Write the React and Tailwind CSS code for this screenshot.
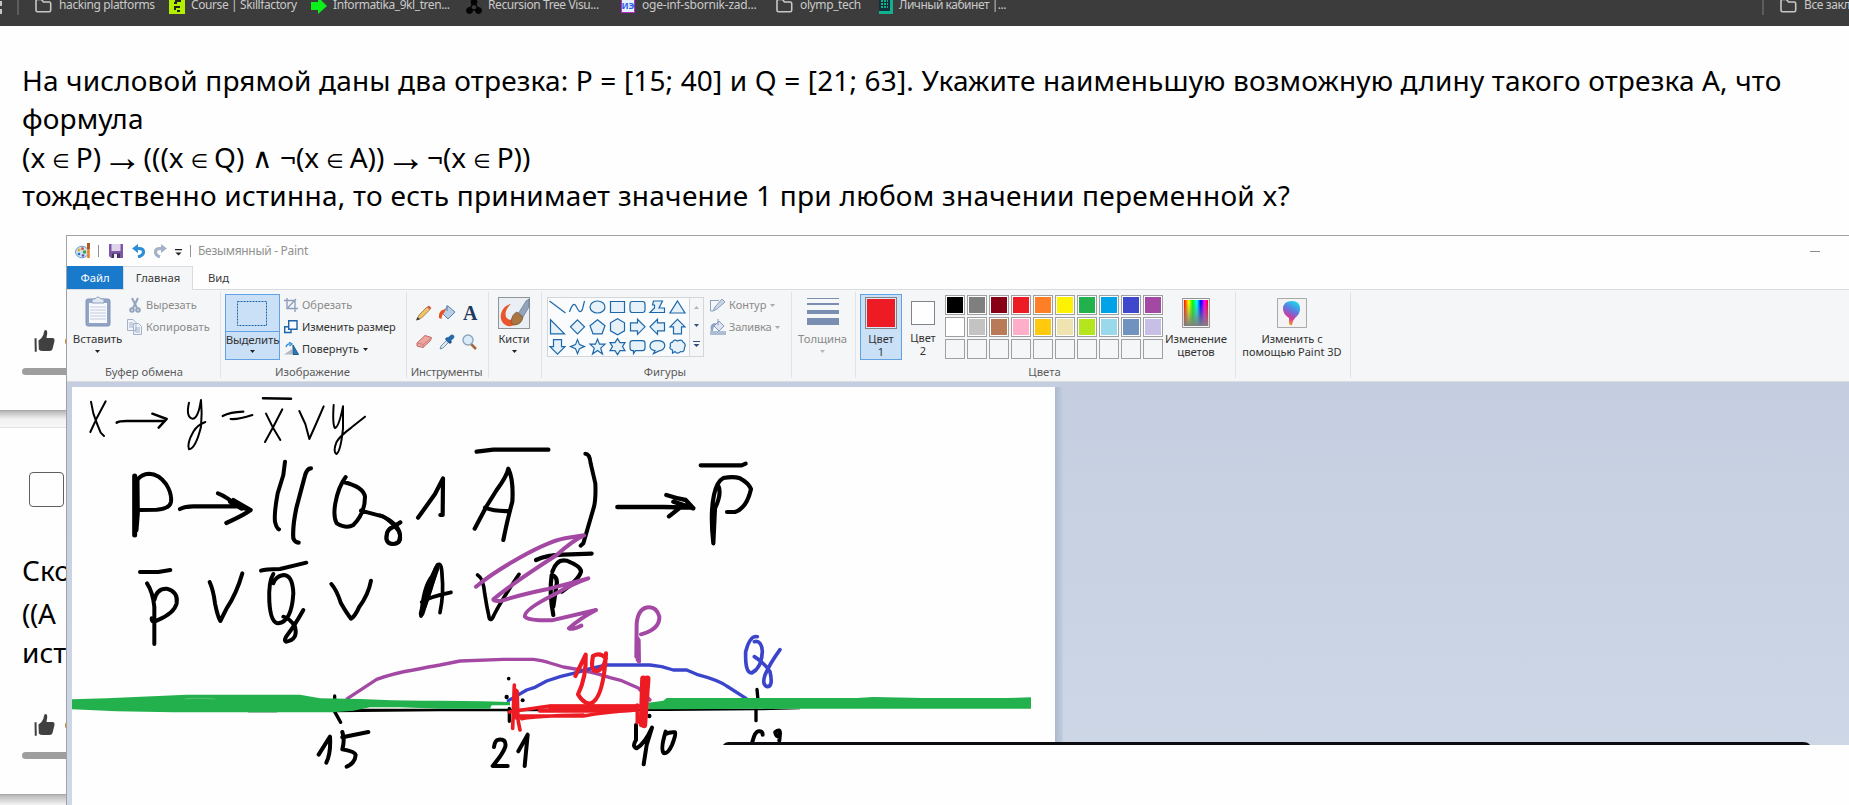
import React from "react";

const Folder = () => (
  <svg width="17" height="15" viewBox="0 0 17 15" className="shrink-0" fill="none" stroke="#c7c7c7" strokeWidth="1.6">
    <path d="M1 3.2Q1 1.5 2.5 1.5H6.5L8.5 4H14.2Q15.7 4 15.7 5.500V12.200Q15.700 13.700 14.200 13.700H2.500Q1 13.700 1 12.200Z" />
  </svg>
);

const Arrow = ({ color = "#1f1f1f" }) => (
  <svg width="5" height="3" viewBox="0 0 5 3" className="shrink-0"><path d="M0 0H5L2.500 3Z" fill={color} /></svg>
);

const Group = ({ className, label, children, labelClass = "" }) => (
  <section className={`flex h-[86px] shrink-0 flex-col border-r border-[#e0e3e6] ${className}`}>
    <div className="flex h-[72px] items-start">{children}</div>
    <div className={`h-[14px] text-center text-[11.3px] text-[#5c5c5c] leading-[15px] whitespace-nowrap ${labelClass}`}>{label}</div>
  </section>
);

const Thumb = () => (
  <svg width="21" height="22" viewBox="0 0 21 22" fill="#404040" className="shrink-0">
    <path d="M.5 8.500L2.500 8L2.800 21.500L.8 22Z" />
    <path d="M4.500 10.500Q8 8.500 9.500 4.500Q9.800 0 11.700 0Q13.500 0 13.200 3.500L12.500 8H19Q21 8.500 20.500 11L18.500 19Q18 21 15.500 21H9Q6 21 4.800 19.500Z" />
  </svg>
);

const In = () => <span className="-ml-[0.5px] -mr-[1px] font-['DejaVu_Sans',sans-serif] text-[20px] leading-none tracking-normal">∈</span>;
const To = () => <span className="-mx-[6px] align-[-3px] font-['Liberation_Sans',sans-serif] text-[40px] leading-[0] tracking-normal">→</span>;

const shapes = [
  "M-8-6L8 6",
  "M-8 5C-5-4-3-4-1 0S3 7 5 2L7-6",
  "M-7.500 0A7.500 6 0 1 0 7.500 0A7.500 6 0 1 0-7.500 0Z",
  "M-7-5.500H7V5.500H-7Z",
  "M-5-5.500H5Q7.500-5.500 7.500-3V3Q7.500 5.500 5 5.500H-5Q-7.500 5.500-7.500 3V-3Q-7.500-5.500-5-5.500Z",
  "M-4-6H5L1.500 1H7V5.500H-7.500L-3 1V-2H-5Z",
  "M0-6L7.500 6H-7.500Z",
  "M-7-7V7H7Z",
  "M0-7L7 0L0 7L-7 0Z",
  "M0-7L7.500-1L4.500 7H-4.500L-7.500-1Z",
  "M0-8L7-4V4L0 8L-7 4V-4Z",
  "M-7-4H0V-7.500L7.500 0L0 7.500V4H-7Z",
  "M7-4H0V-7.500L-7.500 0L0 7.500V4H7Z",
  "M-4 7V0H-7.500L0-7.500L7.500 0H4V7Z",
  "M-4-7V0H-7.500L0 7.500L7.500 0H4V-7Z",
  "M0-7L2-2L7 0L2 2L0 7L-2 2L-7 0L-2-2Z",
  "M0-7.500L2-2.500H7.500L3.200 1.500L5 7.500L0 4L-5 7.500L-3.200 1.500L-7.500-2.500H-2Z",
  "M0-8L2.500-4H7.500L5 0L7.500 4H2.500L0 8L-2.500 4H-7.500L-5 0L-7.500-4H-2.500Z",
  "M-5-6H5Q7.500-6 7.500-3.500V1.500Q7.500 4 5 4H-2L-4 7V4H-5Q-7.500 4-7.500 1.500V-3.500Q-7.500-6-5-6Z",
  "M-2.500 4C-10 2.500-9-6 0-6S10 2.500 1 4.500L-4 7Z",
  "M-5-4.500Q-3-8 0-5.500Q4-8 5.500-4.500Q9-2 7 1Q7 6 3 5Q0 8-2.500 5L-5 6.500V3.500Q-9 2-7-.5Q-8-4-5-4.500Z",
];

const palette = [
  "#000000", "#7f7f7f", "#880015", "#ed1c24", "#ff7f27", "#fff200", "#22b14c", "#00a2e8", "#3f48cc", "#a349a4",
  "#ffffff", "#c3c3c3", "#b97a57", "#ffaec9", "#ffc90e", "#efe4b0", "#b5e61d", "#99d9ea", "#7092be", "#c8bfe7",
  null, null, null, null, null, null, null, null, null, null,
];

const Bookmarks = () => (
  <nav className="relative flex h-[26px] shrink-0 overflow-hidden bg-[#3c3c3c] text-[#c9c9c9] text-[12px] leading-[12px]">
    <div className="-mt-[5px] flex h-[20px] w-full items-center whitespace-nowrap">
      <div className="flex w-[3px] flex-col gap-[3px] pt-1"><i className="h-[5px] w-[2px] bg-[#c7c7c7]" /><i className="h-[5px] w-[2px] border border-[#c7c7c7]" /></div>
      <i className="ml-[14px] h-[16px] w-[2px] self-end bg-[#5c5c5c]" />
      <div className="ml-[16px] flex w-[134px] items-center"><Folder /><span className="ml-[7px] tracking-[-0.38px]">hacking platforms</span></div>
      <div className="flex w-[142px] items-center">
        <svg width="16" height="17" viewBox="0 0 16 17" className="shrink-0"><path d="M0 0H16V17H0Z" fill="#b5ef00" /><path d="M6 3H12V5H8V7H5V5H6M5 9H11V11H7V13H5M8 13H11V15H8" fill="#222" /></svg>
        <span className="ml-[6px] tracking-[-0.4px]">Course | Skillfactory</span>
      </div>
      <div className="flex w-[155px] items-center">
        <svg width="16" height="17" viewBox="0 0 16 17" className="shrink-0"><path d="M0 5H7V0L16 9L7 17V13H0Z" fill="#0bef1b" /></svg>
        <span className="ml-[6px] tracking-[-0.42px]">Informatika_9kl_tren...</span>
      </div>
      <div className="flex w-[155px] items-center">
        <svg width="16" height="17" viewBox="0 0 16 17" className="shrink-0" fill="#050505" stroke="#050505"><path d="M8 4L3.500 13H12.500Z" fill="none" strokeWidth="1.5" /><circle cx="8" cy="5" r="3" /><circle cx="3.500" cy="13.500" r="3" /><circle cx="12.500" cy="13.500" r="3" /></svg>
        <span className="ml-[6px] tracking-[-0.4px]">Recursion Tree Visu...</span>
      </div>
      <div className="flex w-[155px] items-center">
        <span className="flex h-[16px] w-[14px] items-center justify-center border border-[#b52bd0] bg-[#e6f0ff] text-[9px] font-bold leading-none text-[#2b62e8]">ИЭ</span>
        <span className="ml-[7px] tracking-[-0.22px]">oge-inf-sbornik-zad...</span>
      </div>
      <div className="flex w-[103px] items-center"><Folder /><span className="ml-[7px] tracking-[-0.38px]">olymp_tech</span></div>
      <div className="flex items-center">
        <svg width="14" height="17" viewBox="0 0 14 17" className="shrink-0"><path d="M0 0H14V17H0Z" fill="#10b090" /><path d="M0 0H11V14H0Z" fill="#12303a" /><path d="M2 4H9M2 7H9M2 10H9" stroke="#14d8a8" strokeWidth="1.500" strokeDasharray="2 1" /></svg>
        <span className="ml-[6px] tracking-[-0.48px]">Личный кабинет |...</span>
      </div>
      <i className="ml-auto h-[16px] w-[2px] self-end bg-[#5c5c5c]" />
      <div className="ml-[16px] flex w-[69px] items-center"><Folder /><span className="ml-[7px] tracking-[-0.4px]">Все закладки</span></div>
    </div>
  </nav>
);

const TitleBar = () => (
  <header className="flex h-[30px] shrink-0 items-center pl-[8px] text-[#8f8f8f]">
    <svg width="17" height="16" viewBox="0 0 17 16"><ellipse cx="7" cy="9" rx="6.500" ry="5.800" fill="#cfe3f4" stroke="#6a9cc8" /><circle cx="4" cy="7" r="1.500" fill="#d8b030" /><circle cx="7.500" cy="5.500" r="1.500" fill="#e2502c" /><circle cx="9.500" cy="9" r="1.800" fill="#3da34c" /><circle cx="4" cy="11" r="1.300" fill="#226fc0" /><circle cx="8" cy="12.500" r="1.300" fill="#5b4fb0" /><path d="M13.500 6V15" stroke="#e87f22" strokeWidth="2.500" /><path d="M13.500 0V6" stroke="#a85c28" strokeWidth="3" /></svg>
    <i className="ml-[6px] h-[12px] w-px bg-[#929292]" />
    <svg width="14" height="14" viewBox="0 0 14 14" className="ml-[10px]"><path d="M0 0H14V14H2L0 12Z" fill="#7d57a8" /><path d="M2.500 0H11.500V7H2.500Z" fill="#ded4ea" /><path d="M3 9.500H11V14H3Z" fill="#44325f" /><path d="M5 10H8V14H5Z" fill="#eee" /></svg>
    <svg width="14" height="14" viewBox="0 0 14 14" className="ml-[9px]"><path d="M2 4.500H7Q11.500 4.500 11.500 8Q11.500 11.500 6 13" fill="none" stroke="#2e8fd8" strokeWidth="3.200" /><path d="M0 4.500L6 0V9Z" fill="#2e8fd8" /></svg>
    <svg width="14" height="14" viewBox="0 0 14 14" className="ml-[7px]"><path d="M12 4.500H7Q2.500 4.500 2.500 8Q2.500 11.500 7 13" fill="none" stroke="#a3b2c8" strokeWidth="3.200" /><path d="M14 4.500L8 0V9Z" fill="#a3b2c8" /></svg>
    <svg width="7" height="7" viewBox="0 0 7 7" className="ml-[8px] mt-[2px]"><path d="M0 0H7V1.200H0ZM.5 3.500H6.500L3.500 6.500Z" fill="#1f1f1f" /></svg>
    <i className="ml-[8px] h-[12px] w-px bg-[#929292]" />
    <span className="ml-[7px] text-[12px] text-[#919191] tracking-[-0.3px]">Безымянный - Paint</span>
    <i className="ml-auto mr-[29px] h-px w-[10px] bg-[#8c8c8c]" />
  </header>
);

const Tabs = () => (
  <div className="flex h-[24px] shrink-0 items-stretch text-[11.3px] text-[#3a3a3a] leading-[24px]">
    <div className="w-[56px] border-b border-[#dadbdc] bg-[#1979ca] text-center text-white">Файл</div>
    <div className="w-[70px] border-x border-t border-[#dadbdc] bg-[#f5f6f7] text-center leading-[22px]">Главная</div>
    <div className="grow border-b border-[#dadbdc] pl-[15px]">Вид</div>
  </div>
);

const Ribbon = () => (
  <div className="flex h-[92px] shrink-0 overflow-hidden border-b border-[#dadbdc] bg-[#f5f6f7] pt-[2px] text-[#333]">
    <Group className="w-[154px]" label="Буфер обмена" labelClass="pl-[1px]">
      <div className="flex w-[61px] flex-col items-center pt-[4px]">
        <svg width="26" height="32" viewBox="0 0 26 32"><rect x="1" y="3" width="24" height="27" rx="2" fill="#92a4c6" stroke="#8194b8" /><path d="M4 7H22V27H4Z" fill="#f7f9fc" /><path d="M5 11H21M5 14H21M5 17H21M5 20H21M5 23H21" stroke="#c0cce0" /><path d="M7 3H10Q13-1 16 3H19V7H7Z" fill="#e3e9f2" stroke="#8d9fbe" /></svg>
        <span className="mt-[3px] text-[11.5px] leading-4 tracking-[-0.1px]">Вставить</span>
        <span className="mt-[3px]"><Arrow /></span>
      </div>
      <div className="-ml-[1px] flex flex-col pt-[2px] text-[#8b8b8b]">
        <div className="flex h-[22px] items-center">
          <svg width="16" height="16" viewBox="0 0 16 16" fill="none" stroke="#94a3be" strokeWidth="2"><path d="M5 1L10 11M11 1L6 11" /><circle cx="5" cy="13" r="1.800" /><circle cx="11" cy="13" r="1.800" /></svg>
          <span className="ml-[3px]">Вырезать</span>
        </div>
        <div className="flex h-[22px] items-center">
          <svg width="16" height="16" viewBox="0 0 16 16" fill="#f0f4fa" stroke="#a3b2ca"><path d="M.5.5H6L9 3.500V11.500H.5ZM6.500 4.500H11.500L14.500 7.500V15.500H6.500Z" /><path d="M2 4H6M2 6H6M2 8H6M8 9H13M8 11H13M8 13H13" /></svg>
          <span className="ml-[3px] tracking-[0.05px]">Копировать</span>
        </div>
      </div>
    </Group>

    <Group className="w-[186px]" label="Изображение" labelClass="pr-[2px]">
      <div className="ml-[4px] mt-[2px] flex h-[66px] w-[55px] flex-col items-center border border-[#62a2e4] bg-[#c9e0f7]">
        <div className="flex h-[37px] w-full items-center justify-center border-b border-[#62a2e4]">
          <svg width="31" height="25" viewBox="0 0 31 25"><rect x=".5" y=".5" width="29" height="24" fill="none" stroke="#1c63a8" strokeDasharray="2 1" /></svg>
        </div>
        <span className="text-[11.5px] leading-[15px] tracking-[-0.2px]">Выделить</span>
        <span className="mt-[3px]"><Arrow /></span>
      </div>
      <div className="ml-[4px] flex flex-col pt-[2px]">
        <div className="flex h-[22px] items-center text-[#8b8b8b]">
          <svg width="14" height="14" viewBox="0 0 14 14" fill="none" stroke="#8fa0bd" strokeWidth="1.400"><path d="M3 0V10.500H14M0 2.500H11V14M4 9.500L12 1" /></svg>
          <span className="ml-[4px]">Обрезать</span>
        </div>
        <div className="flex h-[22px] items-center">
          <svg width="14" height="14" viewBox="0 0 14 14" fill="#f8fbfe" stroke="#1c63a8" strokeWidth="1.400"><path d="M.7 6.700H7V12.500H.7Z" /><path d="M4.700.7H13V9.300H4.700Z" /></svg>
          <span className="ml-[4px] tracking-[-0.1px]">Изменить размер</span>
        </div>
        <div className="flex h-[22px] items-center">
          <svg width="15" height="14" viewBox="0 0 15 14"><path d="M0 12.500L8 7V12.500Z" fill="#b4b9bf" /><path d="M9 3V12.500H14.500Z" fill="#2d78b8" stroke="#1c5990" /><path d="M2 5Q3 1.500 6 2M5 0L8 2L5.500 4" fill="none" stroke="#2f8bd5" strokeWidth="1.300" /></svg>
          <span className="ml-[3px] mr-[4px]">Повернуть</span><Arrow />
        </div>
      </div>
    </Group>

    <Group className="w-[82px]" label="Инструменты" labelClass="pr-[2px] tracking-[-0.25px]">
      <div className="ml-[9px] grid grid-cols-[23px_23px_16px] gap-y-[12px] pt-[13px]">
        <svg width="16" height="16" viewBox="0 0 16 16"><path d="M1 14.500L3 10L11 2L14 4.500L5.500 13Z" fill="#efc36b" stroke="#96702c" strokeWidth=".8" /><path d="M11 2L13 .5L15.500 3L14 4.500Z" fill="#d65a52" /><path d="M0 15.500L1.500 12L4 14.500Z" fill="#3c3c3c" /></svg>
        <svg width="18" height="16" viewBox="0 0 18 16"><path d="M3 8L9 1L16 7L9 14Z" fill="#b7cfe7" stroke="#5f7ea5" /><path d="M0 13Q-1 5 7 4L5 8Q3 9 2.500 14Z" fill="#e8501f" /><path d="M8 0V6" stroke="#5f7ea5" /></svg>
        <span className="pl-px font-['Liberation_Serif',serif] text-[20px] font-bold leading-[17px] text-[#1e3a60]">A</span>
        <svg width="17" height="16" viewBox="0 0 17 16"><path d="M1 9L9 1.500L15.500 3.500L14.500 6.500L7 13.500L1 12Z" fill="#efa5a0" stroke="#bb6b66" /><path d="M1 9L7.500 10.500L15.500 3.500M7.500 10.500L7 13.500" fill="none" stroke="#cf807b" /></svg>
        <svg width="17" height="16" viewBox="0 0 17 16"><path d="M1 15L2 12L8 6L10 8L4 14Z" fill="#dce9f2" stroke="#7492a8" /><path d="M7 4L12 9" stroke="#1d4e86" strokeWidth="3" /><path d="M9.500 6L13 2.800" stroke="#2769ab" strokeWidth="4.500" strokeLinecap="round" /></svg>
        <svg width="16" height="16" viewBox="0 0 16 16"><path d="M9 10L14 15" stroke="#a8673a" strokeWidth="2.500" /><circle cx="6" cy="6" r="5" fill="#d9ebf9" stroke="#8da4ba" strokeWidth="1.400" /></svg>
      </div>
    </Group>

    <Group className="w-[53px]" label="">
      <div className="ml-[9px] flex w-[32px] flex-col items-center pt-[5px]">
        <svg width="32" height="32" viewBox="0 0 32 32"><rect x=".5" y=".5" width="31" height="31" fill="#e9eff4" stroke="#8f9499" /><path d="M13 7Q7 8 4 14Q1 21 5 26Q9 31 17 28L22 25L17 21Q11 25 8 20Q6 13 13 7Z" fill="#e8562a" /><path d="M20 17L28 4L31 2V10L25 20Z" fill="#93a3bb" stroke="#596b85" strokeWidth=".6" /><path d="M13 25Q14 17 19 15L25 20Q24 27 17 28Q14 28 13 25Z" fill="#a97542" stroke="#74502c" strokeWidth=".7" /></svg>
        <span className="mt-[2px] leading-4">Кисти</span>
        <span className="mt-[3px]"><Arrow /></span>
      </div>
    </Group>

    <Group className="w-[250px]" label="Фигуры" labelClass="pr-[3px]">
      <div className="ml-[5px] mt-[5px] flex h-[60px] w-[157px] border border-[#d3d6d9] bg-[#f9fbfd]">
        <svg width="141" height="58" viewBox="0 0 141 58" stroke="#1e68a9" strokeWidth="1.200">
          {shapes.map((d, i) => (
            <path key={i} d={d} fill={i < 2 ? "none" : "#e6f1f9"} transform={`translate(${9.5 + (i % 7) * 20} ${9 + Math.floor(i / 7) * 19.8})`} />
          ))}
        </svg>
        <div className="flex w-[14px] flex-col items-center justify-between border-l border-[#d3d6d9] bg-[#f5f6f7] py-[8px]">
          <svg width="5" height="3"><path d="M0 3H5L2.500 0Z" fill="#b0b4b9" /></svg>
          <Arrow color="#34517a" />
          <svg width="7" height="7" viewBox="0 0 7 7"><path d="M0 0H7V1H0ZM.5 3H6.500L3.500 6Z" fill="#34517a" /></svg>
        </div>
      </div>
      <div className="ml-[6px] flex flex-col pt-[2px] text-[#8b8b8b]">
        <div className="flex h-[22px] items-center">
          <svg width="16" height="15" viewBox="0 0 16 15"><path d="M.5 2.500H9M.5 2V13M.5 13H3" stroke="#8b9fc0" fill="none" /><path d="M3 13L5 9L12 1L15 4L7 11Z" fill="#c9d3e3" stroke="#8b9fc0" /></svg>
          <span className="ml-[3px] mr-[4px]">Контур</span><Arrow color="#a9a9a9" />
        </div>
        <div className="flex h-[22px] items-center">
          <svg width="16" height="16" viewBox="0 0 16 16"><path d="M0 12H16V16H0Z" fill="#aebdd6" /><path d="M4 7L9 2L14 7L9 12Z" fill="#dce4ef" stroke="#8799b6" /><path d="M8 0V6" stroke="#8799b6" /><path d="M1 12Q-1 4 6 4L5 7Q3 8 3 12Z" fill="#8fa3c4" /></svg>
          <span className="ml-[3px] mr-[4px] tracking-[-0.2px]">Заливка</span><Arrow color="#a9a9a9" />
        </div>
      </div>
    </Group>

    <Group className="w-[64px]" label="">
      <div className="flex w-[61px] flex-col items-center pt-[6px] text-[#8b8b8b]">
        <div className="flex h-[34px] w-[32px] flex-col"><i className="h-px bg-[#7a8eb1]" /><i className="mt-[4px] h-[2px] bg-[#7a8eb1]" /><i className="mt-[5px] h-[4px] bg-[#7a8eb1]" /><i className="mt-[4px] h-[7px] bg-[#7a8eb1]" /></div>
        <span className="-mt-px text-[11.3px] leading-4 tracking-[-0.1px]">Толщина</span>
        <span className="mt-[3px]"><Arrow color="#b5b5b5" /></span>
      </div>
    </Group>

    <Group className="w-[380px]" label="Цвета" labelClass="pr-[2px]">
      <div className="ml-[4px] mt-[2px] flex h-[66px] w-[42px] flex-col items-center border border-[#62a2e4] bg-[#c9e0f7] pt-[2px] leading-[13px]">
        <i className="mb-[3px] h-[32px] w-[32px] border border-[#808488] bg-[#ed1c24] outline-1 -outline-offset-2 outline-[#dbe9f7]" />
        <span>Цвет</span><span>1</span>
      </div>
      <div className="flex w-[42px] flex-col items-center pt-[9px] leading-[13px]">
        <i className="mb-[6px] h-[24px] w-[24px] border border-[#808488] bg-[#fefefe]" />
        <span>Цвет</span><span>2</span>
      </div>
      <div className="ml-[1px] grid grid-cols-[repeat(10,22px)] gap-y-[2px] pt-[3px]">
        {palette.map((c, i) => (
          <i key={i} className="h-[20px] w-[20px] border border-[#a0a0a0]">
            {c && <b className="block h-full w-full border border-white" style={{ backgroundColor: c }} />}
          </i>
        ))}
      </div>
      <div className="flex w-[62px] flex-col items-center pt-[6px] text-center text-[11.4px] leading-[13px] tracking-[-0.1px]">
        <svg width="28" height="30" viewBox="0 0 30 30" preserveAspectRatio="none">
          <defs>
            <linearGradient id="hue"><stop offset="0" stopColor="#f00" /><stop offset=".2" stopColor="#ff0" /><stop offset=".36" stopColor="#0f0" /><stop offset=".54" stopColor="#0ff" /><stop offset=".7" stopColor="#00f" /><stop offset=".85" stopColor="#f0f" /><stop offset="1" stopColor="#f00" /></linearGradient>
            <linearGradient id="fade" x2="0" y2="1"><stop offset=".1" stopColor="#808080" stopOpacity="0" /><stop offset="1" stopColor="#808080" /></linearGradient>
          </defs>
          <path d="M.5.5H29.500V29.500H.5Z" fill="#f8f8f8" stroke="#8f8f8f" /><path d="M2 2H28V28H2Z" fill="url(#hue)" /><path d="M2 2H28V28H2Z" fill="url(#fade)" />
        </svg>
        <span className="mt-[4px]">Изменение<br />цветов</span>
      </div>
    </Group>

    <Group className="w-[115px]" label="">
      <div className="flex w-[112px] flex-col items-center pt-[6px] text-center leading-[13px]">
        <svg width="30" height="30" viewBox="0 0 30 30">
          <defs><linearGradient id="drop" x1=".7" y1="0" x2=".3" y2="1"><stop offset="0" stopColor="#18d8ee" /><stop offset=".4" stopColor="#6078e0" /><stop offset=".7" stopColor="#d43898" /><stop offset="1" stopColor="#ffb000" /></linearGradient></defs>
          <path d="M.5.5H29.500V29.500H.5Z" fill="#f3f3f3" stroke="#a9a9a9" /><path d="M15 3Q23 3 23 11Q23 16 18 20Q15 23 15 27Q12 28 12 24L12 20Q6 16 6 11Q6 3 15 3Z" fill="url(#drop)" />
        </svg>
        <span className="mt-[4px] whitespace-nowrap">Изменить с<br />помощью Paint 3D</span>
      </div>
    </Group>
  </div>
);

const Drawing = () => (
  <svg className="h-[418px] w-[983px] shrink-0 bg-[#fefefe]" viewBox="72 387 983 418" fill="none" strokeLinecap="round" strokeLinejoin="round">
    {/* top line: implication rule */}
    <g transform="translate(0 300) scale(.33333)" stroke="#000" strokeWidth="6">
      <path d="M273 305L280 340Q290 370 302 398L312 408M317 304L290 355L271 396" />
      <path d="M350 368Q358 363 380 363H490M457 341L500 357L476 383" strokeWidth="7.500" />
      <path d="M567 308Q557 350 577 356Q594 358 603 300Q607 340 603 380Q587 445 567 448Q560 430 580 395Q592 375 616 366" />
      <path d="M668 348Q690 336 730 335M692 357Q715 359 757 345" strokeWidth="6.500" />
      <path d="M789 295L873 296" strokeWidth="7.500" />
      <path d="M798 341L820 385L841 420M847 328L820 380L795 426" />
      <path d="M898 333L916 372L928 417L948 372L971 319" />
      <path d="M1001 315Q997 375 1005 384Q1017 380 1029 319V385Q1022 455 1009 462Q998 455 1010 425Q1020 408 1055 382L1095 350" />
    </g>
    {/* main formula, left part */}
    <g transform="translate(0 300) scale(.33333)" stroke="#000" strokeWidth="13">
      <path d="M404 528V705M411 540L412 640L408 690" strokeWidth="15" />
      <path d="M408 543Q425 521 447 521Q477 522 498 552Q516 580 513 605Q510 626 470 629L420 630" strokeWidth="12" />
      <path d="M540 627Q555 619 580 619H720M654 580Q680 590 715 620L752 630Q730 646 679 669M690 605L725 626M700 600L752 630" strokeWidth="12.500" />
      <path d="M855 485L850 525L833 580Q822 640 825 665Q830 685 837 688" strokeWidth="12" />
      <path d="M933 505Q920 505 914 530L890 620Q877 680 880 715Q884 727 896 728" strokeWidth="12.500" />
      <path d="M1037 531Q1015 560 1006 610Q999 650 1010 670Q1040 688 1060 675Q1095 640 1095 590Q1090 560 1030 546M1083 632L1150 650Q1180 665 1190 680Q1208 705 1194 727Q1168 740 1160 720Q1156 690 1178 682L1200 667" strokeWidth="12" />
    </g>
    {/* main formula, right part, and the struck-out term */}
    <g transform="translate(380 380) scale(.33333)" stroke="#000" strokeWidth="12.500">
      <path d="M0 406Q15 410 30 425Q65 455 61 478Q55 495 35 491Q15 488 20 465Q22 445 40 440L62 427" strokeWidth="11" />
      <path d="M114 413L135 384L165 342L189 295L188 405L181 405" />
      <path d="M290 215L340 209H505" strokeWidth="13" />
      <path d="M284 446L320 378L350 330Q380 290 385 266Q401 300 397 365Q383 415 370 480M315 383Q345 395 388 393" />
      <path d="M616 221Q629 221 632 250L646 310Q648 355 642 380L610 490L602 497" strokeWidth="12" />
      <path d="M712 381H850L938 383M859 345Q890 355 917 360L940 385L880 365M867 409L910 375" strokeWidth="13" />
      <path d="M962 256H1085L1097 251" />
      <path d="M1015 318Q1026 340 1005 385L1000 490Q990 400 1002 345Q1010 305 1030 294Q1060 288 1080 295Q1105 308 1113 327Q1100 385 1065 396H1041" />
      <path d="M123 708Q130 620 155 590L172 555Q155 630 123 708M172 555Q185 545 186 585Q192 640 180 698M125 666Q150 650 213 637" strokeWidth="11" />
      <path d="M125 700L150 620L170 565" strokeWidth="17" />
      <path d="M293 585Q310 595 314 640Q320 680 328 715Q334 725 342 705Q365 660 417 583" strokeWidth="11" />
      <path d="M468 540Q500 525 550 524L635 521" />
      <path d="M520 705Q507 640 515 585Q537 590 528 625L520 680M517 575Q530 535 560 542Q605 560 603 575Q596 600 545 635" strokeWidth="12.500" />
      <g stroke="#a349a4">
        <path d="M288 620Q330 585 390 550Q500 485 555 475L612 466Q580 480 530 525Q390 615 340 658Q340 665 365 662Q420 645 500 628L625 595Q580 610 520 645Q430 690 435 710Q445 722 515 721L648 690Q600 715 567 745Q575 751 604 737" strokeWidth="12" />
      </g>
    </g>
    {/* simplified formula */}
    <g transform="translate(0 540) scale(.33333)" stroke="#000" strokeWidth="12">
      <path d="M420 96H475L511 90" />
      <path d="M441 130Q458 155 463 200V312M463 180Q470 145 500 146Q535 155 530 190Q523 220 470 242Q455 250 455 235" />
      <path d="M629 126Q640 150 645 190Q653 230 661 243L680 205Q710 160 727 100" />
      <path d="M783 92Q795 88 840 87L919 68" />
      <path d="M820 102Q805 125 808 185Q812 250 835 250Q875 245 880 160Q878 105 850 105Q825 110 820 130M850 230Q870 235 885 260Q895 300 858 305Q850 300 862 285Q885 255 910 210" />
      <path d="M994 132Q1010 150 1023 190Q1040 220 1053 236Q1065 230 1078 200Q1105 165 1113 122" />
      <path d="M1004 468V515L1022 547" strokeWidth="10" />
      <path d="M956 644L990 590Q993 640 979 668M1027 576Q1035 600 1027 628Q1065 635 1067 645Q1065 670 1040 680M1027 592L1105 576" />
      <path d="M1000 506H2400V508L2270 511L2000 513L1320 514L1000 517Z" fill="#000" stroke="none" />
      <path d="M745 514H830" strokeWidth="5" />
    </g>
    {/* number line, intervals and marks */}
    <g transform="translate(440 590) scale(.33333)" strokeWidth="10">
      <path d="M-278 326L-190 268Q-140 250 -80 240Q-30 230 0 225L60 213L190 208L280 208Q310 212 330 219L370 231Q460 245 510 263L545 272L595 294L630 330" stroke="#a349a4" />
      <path d="M205 332L260 300L285 292L320 273Q360 258 400 250Q450 235 500 225H630L665 230L700 240H740L770 253Q835 270 860 288L918 325" stroke="#3b45cc" />
      <path d="M593 210V145M596 150L597 215M603 133Q660 118 658 80Q650 52 628 52Q595 52 590 100L589 200" stroke="#a349a4" strokeWidth="12" />
      <path d="M952 140Q930 135 917 185Q915 250 935 249Q965 235 967 185Q965 150 943 155M943 200Q975 220 990 245Q1000 290 982 290Q965 285 975 255Q990 220 1020 179" stroke="#3b45cc" strokeWidth="11" />
      <path d="M951 298L954 330M948 360V392M208 355V394" stroke="#000" strokeWidth="10" />
      <g fill="#000"><circle cx="206" cy="266" r="5.500" /><circle cx="200" cy="321" r="6.500" /><circle cx="248" cy="331" r="6" /><circle cx="628" cy="378" r="6.500" /></g>
      <path d="M162 471Q165 450 175 449Q200 445 196 470Q190 490 158 528H203M235 484L263 434L254 528" stroke="#000" strokeWidth="12" />
      <path d="M588 405V450Q575 470 590 475Q615 460 636 413L620 465L611 523M677 425Q660 480 672 490Q685 490 696 465Q710 430 705 427Q690 425 677 432" stroke="#000" strokeWidth="12" />
      <path d="M937 456Q945 425 955 424Q968 422 968 434M1006 426Q1020 415 1020 430L1018 452M1006 428Q1008 440 1018 440" stroke="#000" strokeWidth="12" />
      <path d="M-1104 328L-1000 325L-760 314H-420L-360 325L-240 327Q-120 334 0 332L130 334L210 336V346L155 346L150 356H0L-120 352L-210 352L-260 362L-320 367L-800 367L-970 364L-1104 358Z" fill="#22b14c" />
      <path d="M625 338L670 332L680 324L1250 324L1300 321L1450 324H1700L1773 322V356H1100L680 358L625 358Z" fill="#22b14c" />
      <path d="M-765 327Q-740 322 -675 327" stroke="#73c98c" strokeWidth="2" />
      <g stroke="#ed1c24">
        <path d="M223 285L218 415M227 300Q230 380 240 420M208 366Q275 355 330 348H600M240 378H430Q480 368 590 360M245 386Q280 378 430 375" strokeWidth="11" />
        <path d="M228 306L230 380" strokeWidth="18" />
        <path d="M330 350H590L520 362H300" strokeWidth="13" />
        <path d="M610 266L606 402M622 266L612 405" strokeWidth="19" />
        <path d="M592 345V397" strokeWidth="11" />
        <path d="M406 258L437 194Q440 260 414 313Q430 340 450 341Q490 330 498 190M498 205Q480 185 459 198Q450 245 470 243Q490 238 496 210" strokeWidth="12.500" />
      </g>
    </g>
  </svg>
);

const PaintWindow = () => (
  <div className="absolute top-[235px] left-[66px] flex h-[570px] w-[1783px] flex-col border-t border-l border-[#a0a3a6] bg-[#fefefe] text-[11px]">
    <TitleBar />
    <Tabs />
    <Ribbon />
    <div className="flex grow overflow-hidden bg-linear-to-b from-[#c4cee0] to-[#cfd8e7] pt-[5px] pl-[5px]">
      <Drawing />
      <i className="h-full w-[8px] shrink-0 bg-linear-to-r from-[#aab7ce] to-[#c3cfdf]" />
    </div>
  </div>
);

export default function App() {
  return (
    <main className="relative flex h-[805px] w-full flex-col overflow-hidden bg-[#fefefe] font-['Noto_Sans','Open_Sans',sans-serif] text-black">
      <Bookmarks />
      <div className="mt-[35px] flex h-[155px] shrink-0 flex-col pl-[22px] text-[28px] leading-[38.4px] whitespace-nowrap">
        <p className="tracking-[0.15px]">На числовой прямой даны два отрезка: P = [15; 40] и Q = [21; 63]. Укажите наименьшую возможную длину такого отрезка A, что</p>
        <p className="tracking-[0.14px]">формула</p>
        <p className="h-[38.4px]">(x <In /> P) <To /> (((x <In /> Q) ∧ ¬(x <In /> A)) <To /> ¬(x <In /> P))</p>
        <p className="tracking-[0.27px]">тождественно истинна, то есть принимает значение 1 при любом значении переменной x?</p>
      </div>
      <section className="flex h-[195px] w-[68px] shrink-0 flex-col overflow-hidden border-b border-[#a8a8a8] pl-[22px]">
        <div className="mt-[114px] ml-[12px] flex items-center"><Thumb /><i className="ml-[10px] h-[9px] w-[9px] shrink-0 rounded-full bg-[#c87812]" /></div>
        <i className="mt-[16px] h-[7px] w-[60px] shrink-0 rounded-full bg-[#9e9e9e]" />
      </section>
      <i className="h-[17px] w-[67px] shrink-0 border-b border-[#e2e2e2] bg-linear-to-b from-[#b8b8b8] via-[#f1f1f1] to-[#f7f7f7]" />
      <section className="flex h-[367px] w-[68px] shrink-0 flex-col overflow-hidden border-b border-[#a8a8a8] pl-[22px]">
        <i className="mt-[44px] ml-[7px] h-[35px] w-[35px] shrink-0 rounded-[4px] border border-[#5f5f5f]" />
        <div className="mt-[43px] flex flex-col text-[28px] leading-[41px] whitespace-nowrap"><span className="h-[43px]">Ско</span><span className="h-[39px] tracking-[-0.4px]">((A → B)</span><span className="h-[41px]">истинно</span></div>
        <div className="mt-[41px] ml-[12px] flex items-center"><Thumb /><i className="ml-[10px] h-[9px] w-[9px] shrink-0 rounded-full bg-[#c87812]" /></div>
        <i className="mt-[16px] h-[7px] w-[60px] shrink-0 rounded-full bg-[#9e9e9e]" />
      </section>
      <i className="h-[10px] w-[67px] shrink-0 bg-linear-to-b from-[#b8b8b8] to-[#f4f4f4]" />
      <PaintWindow />
      <div className="absolute top-[742px] left-[714px] flex h-[63px] w-[1135px] flex-col">
        <svg width="1135" height="3" viewBox="0 0 1135 3"><path d="M9 3Q11 0 15 0H1089Q1094 0 1096 3Z" fill="#0b0b10" /></svg>
        <div className="grow bg-[#fefefe]" />
      </div>
    </main>
  );
}
